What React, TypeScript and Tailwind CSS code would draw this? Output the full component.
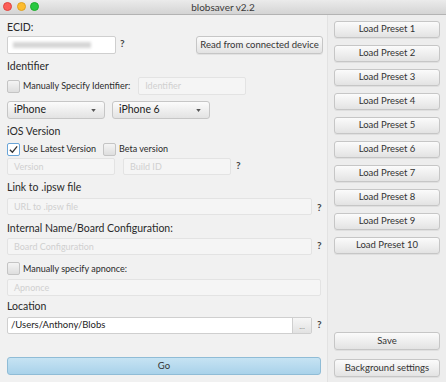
import React from 'react';

const font = { fontFamily: 'Lato, "Liberation Sans", sans-serif' };

const Btn: React.FC<{ label: string; className?: string }> = ({ label, className = '' }) => (
    <div className={`flex items-center justify-center whitespace-nowrap rounded-[3px] border border-[#c6c6c6] bg-gradient-to-b from-[#fbfbfb] to-[#e3e3e3] text-[9.5px] text-[#333] shadow-[0_1px_0_rgba(0,0,0,0.06)] ${className}`}>
        {label}
    </div>
);

const Field: React.FC<{ placeholder?: string; className?: string }> = ({ placeholder, className = '' }) => (
    <div className={`flex items-center px-[6px] whitespace-nowrap rounded-[2px] border text-[9px] bg-[#f5f5f5] border-[#e3e3e3] text-[#d0d0d0] ${className}`}>
        {placeholder}
    </div>
);

const Check: React.FC<{ checked?: boolean }> = ({ checked }) => (
    <div className={`w-[13px] h-[13px] shrink-0 rounded-[2px] border flex items-center justify-center ${checked ? 'border-[#6aa5d8] bg-white' : 'border-[#c4c4c4] bg-gradient-to-b from-[#f4f4f4] to-[#dedede]'}`}>
        {checked && (
            <svg viewBox="0 0 12 12" className="w-[11px] h-[11px]">
                <path d="M2 6.2 L4.8 9 L10 2.6" fill="none" stroke="#333" strokeWidth="1.4" />
            </svg>
        )}
    </div>
);

const Q: React.FC<{ className?: string }> = ({ className = '' }) => (
    <span className={`text-[10px] font-bold text-[#444] leading-none ${className}`}>?</span>
);

const Label: React.FC<{ text: string; className?: string }> = ({ text, className = '' }) => (
    <div className={`h-[12px] flex items-center whitespace-nowrap text-[10.5px] text-[#2a2a2a] ${className}`}>{text}</div>
);

const Small: React.FC<{ text: string; className?: string }> = ({ text, className = '' }) => (
    <span className={`ml-[3px] whitespace-nowrap text-[9px] text-[#2a2a2a] ${className}`}>{text}</span>
);

const Select: React.FC<{ label: string }> = ({ label }) => (
    <div className="w-[98px] h-[18px] flex items-center justify-between pl-[6px] pr-[8px] rounded-[3px] border border-[#c6c6c6] bg-gradient-to-b from-[#fbfbfb] to-[#e3e3e3] text-[10.5px] text-[#222]">
        <span>{label}</span>
        <svg viewBox="0 0 6 4" className="w-[5px] h-[3px]"><path d="M0 0 H6 L3 4 Z" fill="#555" /></svg>
    </div>
);

export default function App() {
    return (
        <div className="w-[446px] h-[382px] flex flex-col bg-[#ededed] overflow-hidden" style={font}>
            <div className="h-[15px] shrink-0 relative flex items-center justify-center bg-gradient-to-b from-[#ebebeb] to-[#d4d4d4] border-b border-[#b3b3b3]">
                <div className="absolute left-[3px] top-[2px] flex gap-[4.5px]">
                    <span className="w-[9px] h-[9px] rounded-full bg-[#fc5e57] border border-[#e0443e]" />
                    <span className="w-[9px] h-[9px] rounded-full bg-[#fdbc2e] border border-[#dea123]" />
                    <span className="w-[9px] h-[9px] rounded-full bg-[#28c840] border border-[#1dad2b]" />
                </div>
                <span className="text-[10px] text-[#3a3a3a]">blobsaver v2.2</span>
            </div>
            <div className="flex flex-1">
                <div className="w-[328px] shrink-0 flex flex-col pl-[7px] border-r border-[#e2e2e2] bg-[#f1f1f1]">
                    <Label text="ECID:" className="mt-[7px]" />
                    <div className="mt-[2px] h-[18px] flex items-center">
                        <div className="w-[109px] h-[18px] flex items-center px-[5px] rounded-[2px] border border-[#cfcfcf] bg-white">
                            <div className="w-[78px] h-[6px] bg-[#d6d6d6] blur-[1.5px]" />
                        </div>
                        <Q className="ml-[4px] -mt-[4px]" />
                        <Btn label="Read from connected device" className="ml-auto mr-[4px] w-[127px] h-[18px]" />
                    </div>
                    <Label text="Identifier" className="mt-[7px]" />
                    <div className="mt-[4px] h-[18px] flex items-center">
                        <Check />
                        <Small text="Manually Specify Identifier:" />
                        <Field placeholder="Identifier" className="ml-[8px] w-[108px] h-[18px]" />
                    </div>
                    <div className="mt-[6px] flex gap-[7px]">
                        <Select label="iPhone" />
                        <Select label="iPhone 6" />
                    </div>
                    <Label text="iOS Version" className="mt-[7px]" />
                    <div className="mt-[4px] h-[14px] flex items-center">
                        <Check checked />
                        <Small text="Use Latest Version" />
                        <div className="ml-[7px]"><Check /></div>
                        <Small text="Beta version" />
                    </div>
                    <div className="mt-[2px] flex items-center">
                        <Field placeholder="Version" className="w-[108px] h-[17px]" />
                        <Field placeholder="Build ID" className="ml-[8px] w-[108px] h-[17px]" />
                        <Q className="ml-[5px] -mt-[4px]" />
                    </div>
                    <Label text="Link to .ipsw file" className="mt-[7px]" />
                    <div className="mt-[4px] flex items-center">
                        <Field placeholder="URL to .ipsw file" className="w-[305px] h-[17px]" />
                        <Q className="ml-[5px]" />
                    </div>
                    <Label text="Internal Name/Board Configuration:" className="mt-[8px]" />
                    <div className="mt-[3px] flex items-center">
                        <Field placeholder="Board Configuration" className="w-[305px] h-[17px]" />
                        <Q className="ml-[5px] -mt-[4px]" />
                    </div>
                    <div className="mt-[7px] h-[13px] flex items-center">
                        <Check />
                        <Small text="Manually specify apnonce:" />
                    </div>
                    <Field placeholder="Apnonce" className="mt-[4px] w-[314px] h-[17px]" />
                    <Label text="Location" className="mt-[5px]" />
                    <div className="mt-[4px] flex items-center">
                        <div className="w-[305px] h-[17px] flex rounded-[2px] border border-[#cfcfcf] bg-white">
                            <span className="flex-1 flex items-center px-[3px] whitespace-nowrap text-[9.5px] text-[#222]">/Users/Anthony/Blobs</span>
                            <div className="w-[19px] flex items-center justify-center border-l border-[#cfcfcf] bg-gradient-to-b from-[#f6f6f6] to-[#e2e2e2] text-[8px] text-[#888]">...</div>
                        </div>
                        <Q className="ml-[5px] -mt-[4px]" />
                    </div>
                    <div className="mt-[23px] w-[314px] h-[18px] flex items-center justify-center rounded-[3px] border border-[#8fbcd6] bg-gradient-to-b from-[#c6e3f3] to-[#a9d2ea] text-[9.5px] text-[#333]">
                        Go
                    </div>
                </div>
                <div className="flex-1 flex flex-col pl-[6px] pr-[6px] pt-[6px] pb-[5px]">
                    <div className="flex flex-col gap-[7px]">
                        {Array.from({ length: 10 }, (_, i) => (
                            <Btn key={i} label={`Load Preset ${i + 1}`} className="h-[17px]" />
                        ))}
                    </div>
                    <div className="mt-auto flex flex-col gap-[9px]">
                        <Btn label="Save" className="h-[18px]" />
                        <Btn label="Background settings" className="h-[18px]" />
                    </div>
                </div>
            </div>
        </div>
    );
}
